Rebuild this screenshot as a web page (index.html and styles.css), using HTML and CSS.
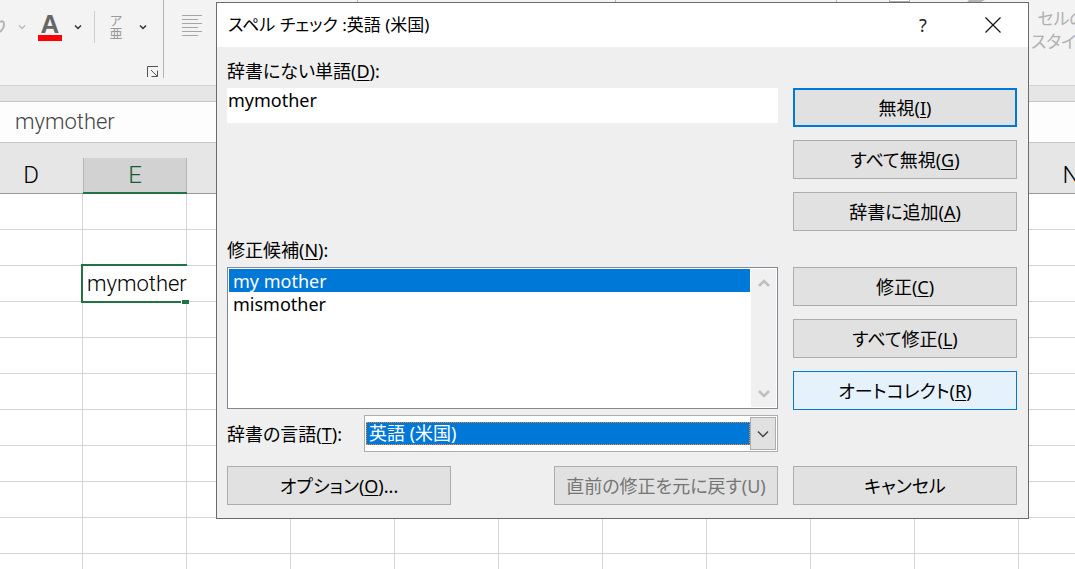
FILE: index.html
```
<!DOCTYPE html>
<html lang="ja">
<head>
<meta charset="utf-8">
<title>スペル チェック</title>
<link rel="stylesheet" href="styles.css">
</head>
<body>
<div class="app">
  <header class="ribbon">
    <div class="group group-font">
      <div class="tools">
        <svg class="fill-tool" width="6" height="34" viewBox="0 0 6 34" aria-hidden="true"><path d="M0 12c3-2 4 0 4 3 0 3-2 5-4 7" fill="none" stroke="#b4b4b4" stroke-width="2"/></svg>
        <svg class="chev" width="8" height="6" viewBox="0 0 8 6" aria-hidden="true"><path d="M1 1.500L4 4.500L7 1.500" fill="none" stroke="#b9b9b9" stroke-width="1.400"/></svg>
        <button class="tool font-color" type="button" aria-label="フォントの色"><span class="letter">A</span></button>
        <svg class="chev" width="8" height="6" viewBox="0 0 8 6" aria-hidden="true"><path d="M1 1.500L4 4.500L7 1.500" fill="none" stroke="#333" stroke-width="1.500"/></svg>
        <span class="divider"></span>
        <button class="tool ruby" type="button" aria-label="ふりがな"><span>ア</span><span>亜</span></button>
        <svg class="chev" width="8" height="6" viewBox="0 0 8 6" aria-hidden="true"><path d="M1 1.500L4 4.500L7 1.500" fill="none" stroke="#333" stroke-width="1.500"/></svg>
      </div>
      <svg class="launcher" width="12" height="12" viewBox="0 0 12 12" aria-hidden="true"><path d="M.5 11V.5H11M4 4l6 6M10.500 4.500V10.500H4.500" fill="none" stroke="#555"/></svg>
    </div>
    <div class="group group-align">
      <svg width="20" height="22" viewBox="0 0 20 22" aria-hidden="true"><path d="M0 .5H20M0 4.500H16M0 8.500H20M0 12.500H16M0 16.500H20M0 20.500H16" stroke="#a6a6a6" fill="none"/></svg>
    </div>
    <div class="group group-number"></div>
    <div class="group group-cond"></div>
    <div class="group group-styles">
      <svg class="style-icons" width="100" height="3" viewBox="0 0 100 3" aria-hidden="true"><path d="M.5 0V1.500H20.500V0" fill="#fff" stroke="#aaa"/><path d="M80 0h16l-6 3H77z" fill="#b5b5b5"/></svg>
      <div class="cell-styles">セルの<br>スタイル</div>
    </div>
  </header>
  <div class="formula"><input class="formula-input" type="text" value="mymother" aria-label="数式バー"></div>
  <main class="sheet">
    <table class="grid">
      <thead><tr><th>D</th><th class="active">E</th><th></th><th></th><th></th><th></th><th></th><th></th><th></th><th></th><th>N</th></tr></thead>
      <tbody>
        <tr><td></td><td></td><td></td><td></td><td></td><td></td><td></td><td></td><td></td><td></td><td></td></tr>
        <tr><td></td><td></td><td></td><td></td><td></td><td></td><td></td><td></td><td></td><td></td><td></td></tr>
        <tr><td></td><td class="selected">mymother</td><td></td><td></td><td></td><td></td><td></td><td></td><td></td><td></td><td></td></tr>
        <tr><td></td><td></td><td></td><td></td><td></td><td></td><td></td><td></td><td></td><td></td><td></td></tr>
        <tr><td></td><td></td><td></td><td></td><td></td><td></td><td></td><td></td><td></td><td></td><td></td></tr>
        <tr><td></td><td></td><td></td><td></td><td></td><td></td><td></td><td></td><td></td><td></td><td></td></tr>
        <tr><td></td><td></td><td></td><td></td><td></td><td></td><td></td><td></td><td></td><td></td><td></td></tr>
        <tr><td></td><td></td><td></td><td></td><td></td><td></td><td></td><td></td><td></td><td></td><td></td></tr>
        <tr><td></td><td></td><td></td><td></td><td></td><td></td><td></td><td></td><td></td><td></td><td></td></tr>
        <tr><td></td><td></td><td></td><td></td><td></td><td></td><td></td><td></td><td></td><td></td><td></td></tr>
        <tr><td></td><td></td><td></td><td></td><td></td><td></td><td></td><td></td><td></td><td></td><td></td></tr>
      </tbody>
    </table>
  </main>

  <section class="dialog" role="dialog" aria-labelledby="dialog-title">
    <div class="titlebar">
      <h1 class="title" id="dialog-title">スペル チェック :英語 (米国)</h1>
      <button class="caption-btn" type="button" aria-label="ヘルプ">?</button>
      <button class="caption-btn" type="button" aria-label="閉じる"><svg width="16" height="16" viewBox="0 0 16 16"><path d="M.5 .5L15.500 15.500M15.500 .5L.5 15.500" stroke="#111" stroke-width="1.200" fill="none"/></svg></button>
    </div>
    <form class="body">
      <div class="field">
        <label for="word">辞書にない単語(<u>D</u>):</label>
        <textarea class="word" id="word" rows="1">mymother</textarea>
      </div>
      <div class="actions">
        <button class="btn default" type="button">無視(<u>I</u>)</button>
        <button class="btn" type="button">すべて無視(<u>G</u>)</button>
        <button class="btn" type="button">辞書に追加(<u>A</u>)</button>
      </div>
      <div class="field">
        <label id="sugg-label">修正候補(<u>N</u>):</label>
        <div class="listbox">
          <ul class="options" role="listbox" aria-labelledby="sugg-label" tabindex="0">
            <li class="option current" role="option" aria-selected="true">my mother</li>
            <li class="option" role="option" aria-selected="false">mismother</li>
          </ul>
          <div class="scrollbar">
            <svg width="12" height="10" viewBox="0 0 12 10" aria-hidden="true"><path d="M1 8L6 3L11 8" fill="none" stroke="#bfbfbf" stroke-width="2.500"/></svg>
            <svg width="12" height="10" viewBox="0 0 12 10" aria-hidden="true"><path d="M1 2L6 7L11 2" fill="none" stroke="#bfbfbf" stroke-width="2.500"/></svg>
          </div>
        </div>
      </div>
      <div class="actions">
        <button class="btn" type="button">修正(<u>C</u>)</button>
        <button class="btn" type="button">すべて修正(<u>L</u>)</button>
        <button class="btn hover" type="button">オートコレクト(<u>R</u>)</button>
      </div>
      <div class="language">
        <label for="lang">辞書の言語(<u>T</u>):</label>
        <div class="combo">
          <select class="combo-select" id="lang"><option>英語 (米国)</option></select>
          <span class="combo-arrow"><svg width="12" height="8" viewBox="0 0 12 8" aria-hidden="true"><path d="M1 1.500L6 6.500L11 1.500" fill="none" stroke="#444" stroke-width="1.500"/></svg></span>
        </div>
      </div>
      <div class="footer">
        <button class="btn" type="button">オプション(<u>O</u>)...</button>
        <button class="btn" type="button" disabled>直前の修正を元に戻す(U)</button>
      </div>
      <button class="btn cancel" type="button">キャンセル</button>
    </form>
  </section>
</div>
</body>
</html>
```

FILE: styles.css
```
* { box-sizing: border-box; }

body {
  margin: 0;
  overflow: hidden;
  background: #fff;
  color: #000;
  font: 18px/22px "Noto Sans", "Noto Sans CJK JP", sans-serif;
  font-feature-settings: "palt";
}

button, input, textarea, select {
  font: inherit;
  font-feature-settings: inherit;
  color: inherit;
  border: 0;
  border-radius: 0;
  margin: 0;
  padding: 0;
  background: none;
}

.app { position: relative; height: 100vh; overflow: hidden; }

/* Ribbon */
.ribbon {
  display: flex;
  height: 86px;
  padding-bottom: 7px;
  background: #f3f3f3;
  border-bottom: 1px solid #d2d2d2;
}
.group { flex: none; border-right: 1px solid #b3b3b3; }
.group-font { width: 164px; display: flex; flex-direction: column; justify-content: space-between; }
.group-align { width: 194px; padding: 15px 18px; }
.group-number { width: 258px; }
.group-cond { width: 221px; }
.group-styles { flex: 1; border: 0; padding-left: 52px; display: flex; align-items: flex-start; }
.tools { display: flex; align-items: center; padding-top: 10px; }
.chev { flex: none; margin: 0 12px; }
.font-color {
  flex: none;
  width: 24px;
  color: #666;
  border-bottom: 6px solid #f00;
  font: bold 26px/22px "Liberation Sans", sans-serif;
}
.letter { display: block; }
.fill-tool { flex: none; }
.divider { flex: none; width: 1px; height: 32px; margin-right: 14px; background: #cdcdcd; }
.ruby {
  flex: none;
  display: flex;
  flex-direction: column;
  align-items: center;
  width: 14px;
  margin-right: 4px;
  color: #999;
  font-size: 13px;
  line-height: 13px;
}
.launcher { align-self: flex-end; margin: 0 4px 0 0; }
.style-icons { flex: none; }
.cell-styles {
  flex: none;
  margin: 7px 0 0 42px;
  color: #b1b1b1;
  text-align: center;
  font-size: 17px;
  line-height: 23px;
}

/* Formula bar */
.formula { padding-top: 15px; background: #e6e6e6; }
.formula-input {
  display: block;
  width: 100%;
  height: 42px;
  padding: 0 15px 2px;
  background: #fdfdfd;
  border-top: 1px solid #c6c6c6;
  border-bottom: 1px solid #c6c6c6;
  color: #444;
  font: 300 22px/26px Roboto, sans-serif;
}

/* Sheet */
.sheet { overflow: hidden; background: linear-gradient(#e6e6e6 50px, #fff 50px); }
.grid {
  width: 1144px;
  margin-left: -21px;
  table-layout: fixed;
  border-collapse: separate;
  border-spacing: 0;
  font: 300 22px/26px Roboto, sans-serif;
}
.grid th {
  height: 51px;
  padding: 13px 0 0;
  border-bottom: 1px solid #999;
  font-weight: 300;
  font-size: 24px;
}
.grid th.active {
  padding-top: 14px;
  color: #185c37;
  border-bottom: 2px solid #217346;
  background: linear-gradient(#e6e6e6 15px, transparent 15px), linear-gradient(90deg, #b5b5b5 1px, #d2d2d2 1px, #d2d2d2 103px, #b5b5b5 103px);
}
.grid td {
  height: 36px;
  padding: 0;
  border-right: 1px solid #d4d4d4;
  border-bottom: 1px solid #d4d4d4;
}
.grid td.selected {
  position: relative;
  padding-left: 4px;
  border-right-color: #fff;
  white-space: nowrap;
}
.selected::before {
  content: "";
  position: absolute;
  inset: -2px -1px -2px -2px;
  border: 2px solid #217346;
  border-right: 0;
}
.selected::after {
  content: "";
  position: absolute;
  right: -3px;
  bottom: -3px;
  width: 7px;
  height: 4px;
  background: #217346;
  border-left: 1px solid #fff;
  border-top: 1px solid #fff;
}

/* Spelling dialog */
.dialog {
  position: absolute;
  left: 216px;
  top: 2px;
  width: 813px;
  background: #efefef;
  border: 1px solid #6b6b6b;
}
.titlebar { display: flex; align-items: center; height: 44px; padding-left: 11px; background: #fff; }
.title { flex: 1; margin: 0; font: inherit; font-size: 17px; }
.caption-btn { width: 70px; height: 44px; display: grid; place-items: center; color: #222; }

.body {
  display: grid;
  grid-template-columns: 1fr 224px;
  column-gap: 15px;
  padding: 13px 11px 13px 10px;
}
.field { display: flex; flex-direction: column; gap: 6px; margin-bottom: 6px; }
.actions { display: flex; flex-direction: column; gap: 13px; padding-top: 28px; margin-bottom: 8px; }
.word {
  height: 35px;
  padding: 1px;
  background: #fff;
  resize: none;
  overflow: hidden;
}
.listbox {
  display: flex;
  height: 142px;
  padding: 1px;
  background: #fff;
  border: 1px solid #828790;
}
.options { flex: 1; margin: 0; padding: 0; list-style: none; outline: 0; }
.option { padding: 1px 0 0 4px; line-height: 22px; }
.current { background: #0078d7; color: #fff; }
.scrollbar {
  display: flex;
  flex-direction: column;
  justify-content: space-between;
  align-items: center;
  width: 25px;
  padding: 9px 0 8px;
  margin-left: 1px;
  background: #f0f0f0;
}

.btn {
  height: 39px;
  padding: 0 4px;
  background: #e1e1e1;
  border: 1px solid #adadad;
  text-align: center;
  white-space: nowrap;
}
.btn:disabled { color: #767676; }
.default { border: 2px solid #0078d7; }
.hover { background: #e5f1fb; border-color: #0078d7; }
u { text-underline-offset: 2px; }

.language { grid-column: 1; display: flex; align-items: center; justify-content: space-between; margin-top: -3px; }
.combo {
  display: flex;
  align-items: center;
  width: 414px;
  height: 37px;
  padding: 1px;
  background: #fff;
  border: 1px solid #adadad;
}
.combo-select {
  flex: 1;
  height: 23px;
  padding-left: 2px;
  appearance: none;
  background: #0078d7;
  color: #fff;
  line-height: 21px;
  border: 1px dotted #ff8728;
}
.combo-arrow {
  display: grid;
  place-items: center;
  width: 26px;
  height: 33px;
  background: #e1e1e1;
  border: 1px solid #adadad;
}
.footer { grid-column: 1; display: flex; justify-content: space-between; margin-top: 14px; }
.footer .btn { width: 224px; }
.cancel { margin-top: 14px; }
```
